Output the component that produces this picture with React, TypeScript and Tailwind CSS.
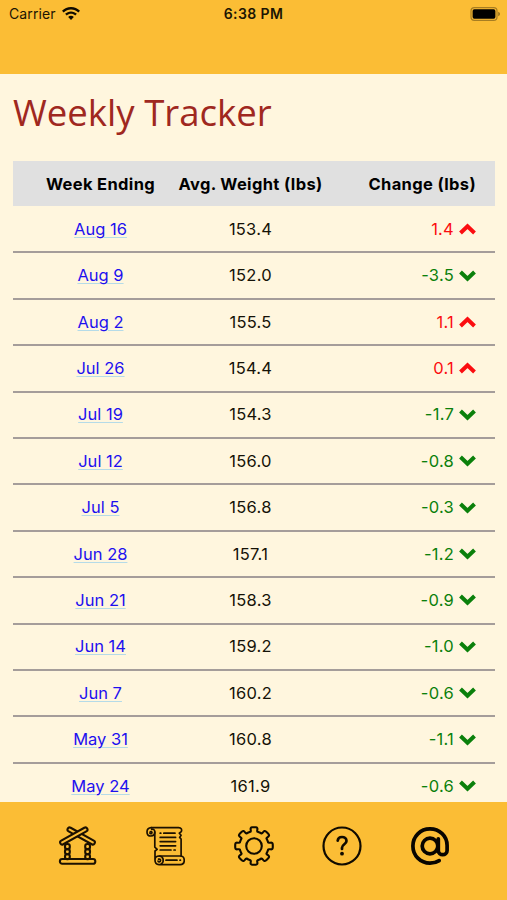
import React from 'react';

type WeekType = {
  date: string;
  weight: string;
  change: string;
};

const weeks: WeekType[] = [
  { date: 'Aug 16', weight: '153.4', change: '1.4' },
  { date: 'Aug 9', weight: '152.0', change: '-3.5' },
  { date: 'Aug 2', weight: '155.5', change: '1.1' },
  { date: 'Jul 26', weight: '154.4', change: '0.1' },
  { date: 'Jul 19', weight: '154.3', change: '-1.7' },
  { date: 'Jul 12', weight: '156.0', change: '-0.8' },
  { date: 'Jul 5', weight: '156.8', change: '-0.3' },
  { date: 'Jun 28', weight: '157.1', change: '-1.2' },
  { date: 'Jun 21', weight: '158.3', change: '-0.9' },
  { date: 'Jun 14', weight: '159.2', change: '-1.0' },
  { date: 'Jun 7', weight: '160.2', change: '-0.6' },
  { date: 'May 31', weight: '160.8', change: '-1.1' },
  { date: 'May 24', weight: '161.9', change: '-0.6' },
];

// Smooth closed outline with eight teeth, centred on 20,20
const gearPath = () => {
  const tooth = [
    [-16.5, 14.6],
    [-11.5, 14.6],
    [-11.5, 18.9],
    [0, 18.9],
    [11.5, 18.9],
    [11.5, 14.6],
    [16.5, 14.6],
  ];
  const points = Array.from({ length: 8 }).flatMap((_, i) =>
    tooth.map(([deg, r]) => {
      const a = ((deg + i * 45) * Math.PI) / 180;
      return [20 + r * Math.sin(a), 20 - r * Math.cos(a)];
    })
  );
  const mid = (a: number[], b: number[]) =>
    `${((a[0] + b[0]) / 2).toFixed(2)} ${((a[1] + b[1]) / 2).toFixed(2)}`;
  const last = points[points.length - 1];
  return (
    `M${mid(last, points[0])}` +
    points
      .map((p, i) => `Q${p[0].toFixed(2)} ${p[1].toFixed(2)} ${mid(p, points[(i + 1) % points.length])}`)
      .join('') +
    'Z'
  );
};

const CabinIcon = () => (
  <svg width="40" height="40" viewBox="-1 0 40 40" fill="none" stroke="#1c1100" strokeWidth="2.1">
    <rect x="7" y="18" width="4.8" height="5.1" rx="2.2" />
    <rect x="7" y="23.1" width="4.8" height="5.1" rx="2.2" />
    <rect x="7" y="28.2" width="4.8" height="5.1" rx="2.2" />
    <rect x="27.2" y="18" width="4.8" height="5.1" rx="2.2" />
    <rect x="27.2" y="23.1" width="4.8" height="5.1" rx="2.2" />
    <rect x="27.2" y="28.2" width="4.8" height="5.1" rx="2.2" />
    <rect x="1.9" y="33" width="35.4" height="4.8" rx="2.3" />
    <rect x="-15.3" y="-2.1" width="30.6" height="4.2" rx="2.1" transform="translate(23.2 10) rotate(29)" fill="#fbbd35" />
    <rect x="-15.3" y="-2.1" width="30.6" height="4.2" rx="2.1" transform="translate(15.8 10) rotate(-29)" fill="#fbbd35" />
  </svg>
);

const ScrollIcon = () => (
  <svg width="40" height="40" viewBox="-1 0 40 40" fill="none" stroke="#1c1100" strokeWidth="1.7" strokeLinecap="round" strokeLinejoin="round">
    <path d="M5.2 1.6H32.6C35.4 1.6 36.2 3.6 35.3 5.6L33.3 7.2L35.1 9.2L33.6 11.4L35.1 13V30" />
    <path d="M5.2 1.6C2.4 1.6 1 3.7 1 5.9C1 8.6 3 10 5 10C7.6 10 8.8 8.4 8.8 5.8C8.8 3.7 7.2 2.8 5.7 3.4M4.3 5.8C5.4 5.2 6.5 6.2 5.7 7.3C5 8 4.1 7.7 3.8 7" />
    <path d="M8.8 6V21.2L11.2 23.3L9 25V34C9 37 10.4 38.6 13 38.6H34.2C39.6 38.6 39.6 30 34.2 30H13.2C10.2 30 9 32 9 34" />
    <path d="M13.2 30C17.8 30 18.4 36 15.2 38M12.6 33.2C14.4 32.8 15.1 34.4 14.2 35.5C13.5 36.2 12.3 35.9 12 35" />
    <path d="M14.2 7.2H14.8M17.8 7.2H29M14.2 11.4H29.6M14.2 15.6H29.6M14.2 19.8H29.6M14.2 24H25M28 24H29.2M20 34.2H31M34 34.2H34.4" />
  </svg>
);

const SettingsIcon = () => (
  <svg width="40" height="40" viewBox="0 0 40 40" fill="none" stroke="#100b00" strokeWidth="2.1" strokeLinejoin="round">
    <path d={gearPath()} />
    <circle cx="20" cy="20" r="7.8" />
  </svg>
);

const HelpIcon = () => (
  <svg width="40" height="40" viewBox="0 0 40 40" fill="none" stroke="#100b00" strokeWidth="2.2" strokeLinecap="round" strokeLinejoin="round">
    <circle cx="20" cy="20" r="18.5" />
    <path d="M15.7 14.6C16 11.9 18 11 20 11C22.5 11 24.5 12.7 24.5 15C24.5 18.3 20 18.3 20 21.8V23" strokeWidth="2.7" />
    <circle cx="20" cy="27.7" r="1.9" fill="#100b00" stroke="none" />
  </svg>
);

const ContactIcon = () => (
  <svg width="40" height="40" viewBox="0 0 40 40" fill="none" stroke="#080500" strokeWidth="3.7" strokeLinecap="round">
    <path d="M29.2 34.6C26.5 36.3 23.4 37.1 20 37.1C10.4 37.1 2.9 29.6 2.9 20C2.9 10.4 10.4 2.9 20 2.9C29.6 2.9 37.1 10.1 37.1 19.5V24.4C37.1 30.1 28.3 30.1 28.3 24.4V12.8" />
    <circle cx="20" cy="20" r="7.8" />
  </svg>
);

const ChangeArrow = ({ up }: { up: boolean }) => (
  <svg width="17" height="12" viewBox="0 0 17 12" fill="none" stroke="currentColor" strokeWidth="4" className={up ? '' : 'rotate-180'}>
    <path d="M1.5 10L8.5 3.3L15.5 10" />
  </svg>
);

const App: React.FC = () => {
  return (
    <div className="flex h-[900px] w-[507px] flex-col overflow-hidden bg-[#fff6de] font-['Inter',sans-serif] text-black">
      {/* Status bar */}
      <header className="h-[74px] shrink-0 bg-[#fbbd35]">
        <div className="grid h-[27px] grid-cols-3 items-center px-[9px] text-[14px] text-[#1c1503]">
          <div className="flex items-center gap-[6px]">
            <span className="tracking-[0.12px]">Carrier</span>
            <svg width="18" height="14" viewBox="0 0 18 14" fill="#100b00">
              <path d="M9 0C12.5 0 15.7 1.4 18 3.7L16.3 5.4C14.4 3.5 11.8 2.4 9 2.4S3.6 3.5 1.7 5.4L0 3.7C2.3 1.4 5.5 0 9 0Z" />
              <path d="M9 4.4C11.3 4.4 13.4 5.3 14.9 6.8L13.2 8.5C12.1 7.4 10.6 6.8 9 6.8S5.9 7.4 4.8 8.5L3.1 6.8C4.6 5.3 6.7 4.4 9 4.4Z" />
              <path d="M9 8.8C10.1 8.8 11.1 9.2 11.8 9.9L9 13L6.2 9.9C6.9 9.2 7.9 8.8 9 8.8Z" />
            </svg>
          </div>
          <span className="text-center font-semibold tracking-[0.4px]">6:38 PM</span>
          <svg width="31" height="14" viewBox="0 0 31 14" className="-mr-[3px] justify-self-end">
            <rect x="1" y="0.7" width="26" height="12.6" rx="3.4" fill="none" stroke="#a77d22" strokeWidth="1.2" />
            <rect x="2.6" y="2.3" width="22.8" height="9.4" rx="1.7" fill="#000" />
            <path d="M28.2 4.8C30.6 5.6 30.6 8.4 28.2 9.2Z" fill="#9b741e" />
          </svg>
        </div>
      </header>

      <main className="min-h-0 flex-1 overflow-hidden px-[13px]">
        <h1 className="h-[87px] pt-[11px] font-['Open_Sans',sans-serif] text-[36.6px] leading-[54px] text-[#9f281f]">
          Weekly Tracker
        </h1>

        <div className="w-[482px] text-[16.5px]">
          <div className="mb-px grid h-[45px] grid-cols-[161px_153px_168px] items-center bg-[#e0e0e0] pt-px font-bold tracking-[0.35px]">
            <span className="pl-[14px] text-center">Week Ending</span>
            <span className="text-center">Avg. Weight (lbs)</span>
            <span className="pr-[19px] text-right">Change (lbs)</span>
          </div>
          {weeks.map((week) => {
            const up = !week.change.startsWith('-');
            return (
              <div
                key={week.date}
                className="grid h-[46.42px] grid-cols-[161px_153px_168px] items-center border-b-2 border-[#a59d9a]"
              >
                <div className="pl-[14px] text-center">
                  <a href="#" className="text-[#1d10ef] underline decoration-[#b5dbe8] decoration-1 underline-offset-2">
                    {week.date}
                  </a>
                </div>
                <span className="text-center tracking-[0.25px] text-[#151207]">{week.weight}</span>
                <div className={`flex items-center justify-end gap-[5px] pr-[19px] ${up ? 'text-[#fb0d10]' : 'text-[#0b800b]'}`}>
                  <span className="tracking-[0.25px]">{week.change}</span>
                  <ChangeArrow up={up} />
                </div>
              </div>
            );
          })}
        </div>
      </main>

      {/* Bottom navigation */}
      <nav className="flex h-[98px] shrink-0 items-start justify-between bg-[#fbbd35] px-[57px] pt-[24px]">
        <CabinIcon />
        <ScrollIcon />
        <SettingsIcon />
        <HelpIcon />
        <ContactIcon />
      </nav>
    </div>
  );
};

export default App;
